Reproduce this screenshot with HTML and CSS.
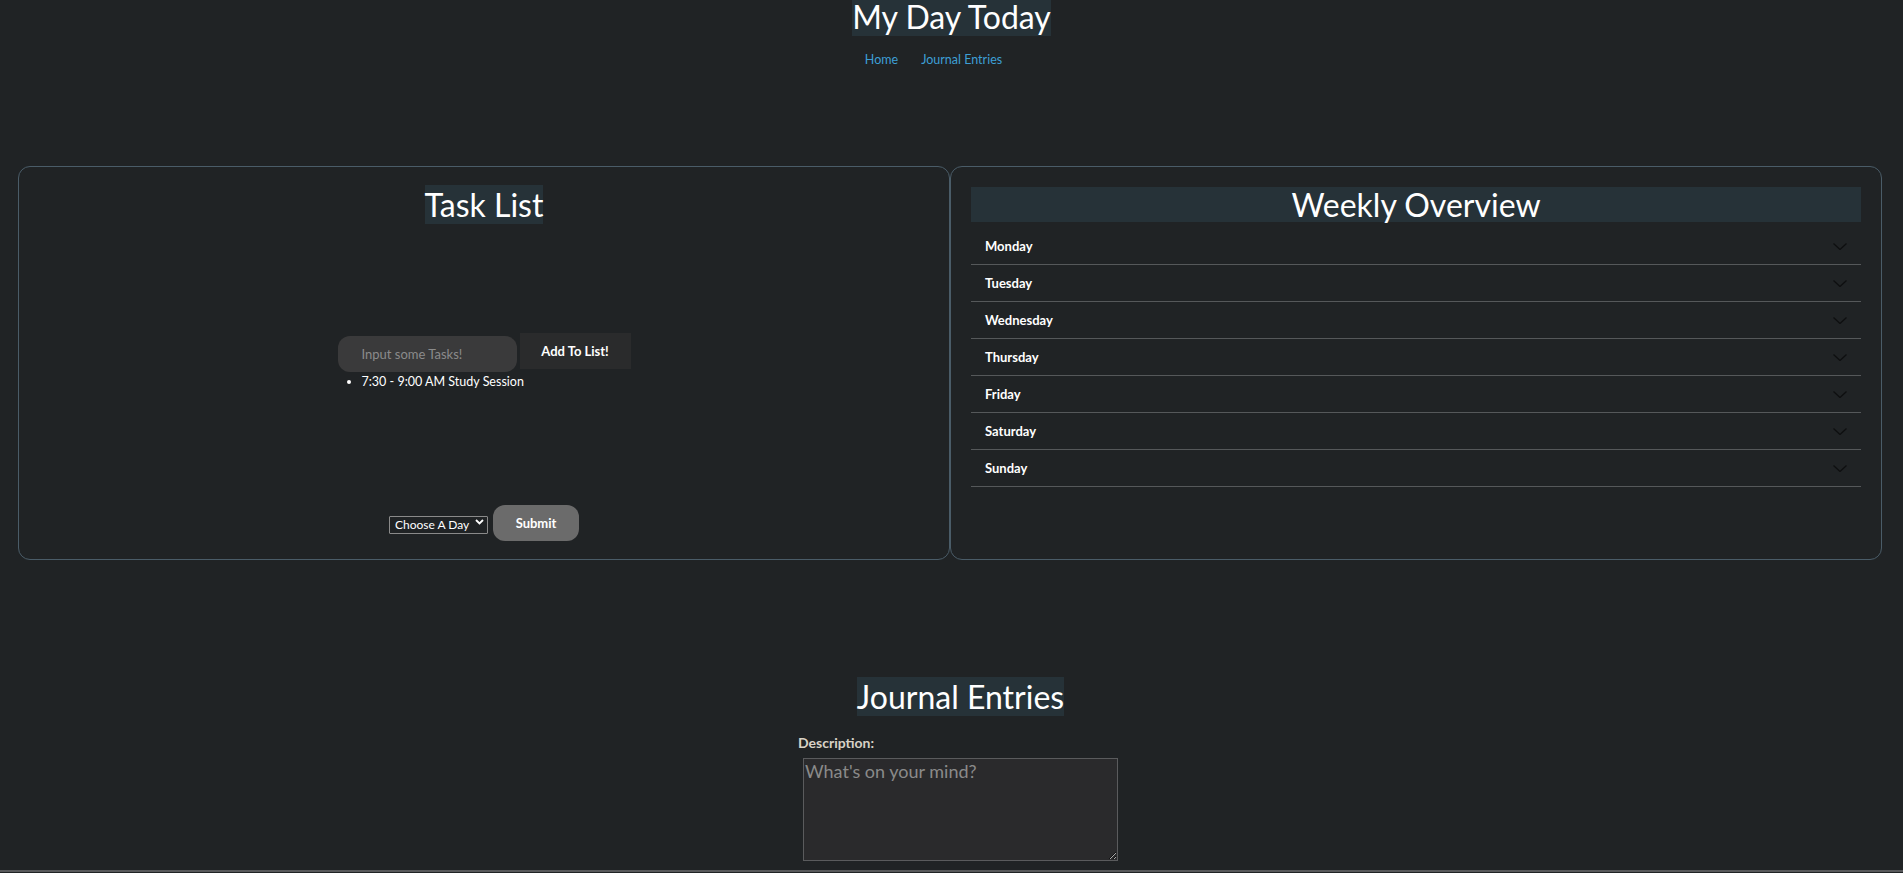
FILE: index.html
```html
<!DOCTYPE html>
<html lang="en">
<head>
<meta charset="utf-8">
<title>My Day Today</title>
<link rel="stylesheet" href="styles.css">
</head>
<body>
<header class="site-header">
  <h1 class="site-title"><span class="hl">My Day Today</span></h1>
  <nav class="site-nav">
    <a href="#" class="nav-link">Home</a>
    <a href="#" class="nav-link">Journal Entries</a>
  </nav>
</header>

<main class="panels">
  <section class="panel task-panel">
    <h2 class="panel-title"><span class="hl">Task List</span></h2>
    <div class="task-body">
      <div class="task-form">
        <input class="task-input" type="text" placeholder="Input some Tasks!">
        <button class="add-btn" type="button">Add To List!</button>
      </div>
      <ul class="task-list">
        <li>7:30 - 9:00 AM Study Session</li>
      </ul>
    </div>
    <div class="day-form">
      <span class="select-wrap">
        <select class="day-select">
          <option>Choose A Day</option>
          <option>Monday</option>
          <option>Tuesday</option>
        </select>
        <svg class="select-arrow" width="9" height="6" viewBox="0 0 9 6"><path d="M1 1 L4.5 4.5 L8 1" fill="none" stroke="#fff" stroke-width="1.8"/></svg>
      </span>
      <button class="submit-btn" type="button">Submit</button>
    </div>
  </section>

  <section class="panel week-panel">
    <h2 class="week-title">Weekly Overview</h2>
    <div class="days">
      <div class="day-row"><span>Monday</span><svg class="chev" width="14" height="7" viewBox="0 0 14 7"><path d="M0.5 0.5 L7 6.5 L13.5 0.5" fill="none" stroke="#0e0f10" stroke-width="1.3"/></svg></div>
      <div class="day-row"><span>Tuesday</span><svg class="chev" width="14" height="7" viewBox="0 0 14 7"><path d="M0.5 0.5 L7 6.5 L13.5 0.5" fill="none" stroke="#0e0f10" stroke-width="1.3"/></svg></div>
      <div class="day-row"><span>Wednesday</span><svg class="chev" width="14" height="7" viewBox="0 0 14 7"><path d="M0.5 0.5 L7 6.5 L13.5 0.5" fill="none" stroke="#0e0f10" stroke-width="1.3"/></svg></div>
      <div class="day-row"><span>Thursday</span><svg class="chev" width="14" height="7" viewBox="0 0 14 7"><path d="M0.5 0.5 L7 6.5 L13.5 0.5" fill="none" stroke="#0e0f10" stroke-width="1.3"/></svg></div>
      <div class="day-row"><span>Friday</span><svg class="chev" width="14" height="7" viewBox="0 0 14 7"><path d="M0.5 0.5 L7 6.5 L13.5 0.5" fill="none" stroke="#0e0f10" stroke-width="1.3"/></svg></div>
      <div class="day-row"><span>Saturday</span><svg class="chev" width="14" height="7" viewBox="0 0 14 7"><path d="M0.5 0.5 L7 6.5 L13.5 0.5" fill="none" stroke="#0e0f10" stroke-width="1.3"/></svg></div>
      <div class="day-row"><span>Sunday</span><svg class="chev" width="14" height="7" viewBox="0 0 14 7"><path d="M0.5 0.5 L7 6.5 L13.5 0.5" fill="none" stroke="#0e0f10" stroke-width="1.3"/></svg></div>
    </div>
  </section>
</main>

<section class="journal">
  <div class="journal-inner">
    <h2 class="journal-title"><span class="hl">Journal Entries</span></h2>
    <label class="desc-label" for="desc">Description:</label>
    <textarea id="desc" class="desc-input" placeholder="What's on your mind?"></textarea>
  </div>
</section>
<footer class="page-foot"></footer>
</body>
</html>
```

FILE: styles.css
```css
* { box-sizing: border-box; }

html, body {
  margin: 0;
  padding: 0;
  background: #202325;
  color: #ffffff;
  font-family: "Lato", "Noto Sans", "DejaVu Sans", sans-serif;
}

.hl {
  background: #263238;
}

.site-header {
  text-align: center;
}

.site-title {
  margin: 0;
  font-size: 32px;
  font-weight: 400;
  line-height: 34px;
}

.site-nav {
  margin-top: 17px;
  display: flex;
  justify-content: center;
  gap: 23px;
  padding-right: 36px;
}

.nav-link {
  color: #3d9fd6;
  text-decoration: none;
  font-size: 12.5px;
  line-height: 17px;
}

.panels {
  display: flex;
  margin-top: 98px;
  padding: 0 21px 0 18px;
}

.panel {
  flex: 1 1 0;
  min-width: 0;
  height: 394px;
  border: 1px solid #4a5c68;
  border-radius: 12px;
  padding: 20px;
}

.task-panel {
  display: flex;
  flex-direction: column;
  justify-content: space-between;
  align-items: center;
  padding-bottom: 18px;
}

.panel-title {
  margin: 0;
  font-size: 32px;
  font-weight: 400;
  line-height: 35px;
  text-align: center;
}

.task-body {
  display: flex;
  flex-direction: column;
  margin-bottom: 5px;
}

.task-form {
  display: flex;
  align-items: flex-start;
  gap: 3px;
}

.task-input {
  width: 179px;
  height: 36px;
  margin-top: 3px;
  border: none;
  border-radius: 12px;
  background: #3a3a3b;
  color: #fff;
  padding: 0 0 0 24px;
  font-family: inherit;
  font-size: 13px;
  outline: none;
}

.task-input::placeholder {
  color: #8b8b8b;
}

.add-btn {
  width: 111px;
  height: 36px;
  border: none;
  background: #2a2b2c;
  color: #fff;
  font-family: inherit;
  font-weight: 700;
  font-size: 13px;
}

.task-list {
  margin: 1px 0 0;
  padding-left: 24px;
  font-size: 12.5px;
  line-height: 17px;
}

.day-form {
  display: flex;
  align-items: center;
  gap: 5px;
}

.select-wrap {
  position: relative;
  display: inline-block;
}

.day-select {
  appearance: none;
  -webkit-appearance: none;
  width: 99px;
  height: 18px;
  border: 1px solid #8a8a8a;
  border-radius: 1px;
  background: #202325;
  color: #fff;
  font-family: inherit;
  font-size: 12px;
  line-height: 16px;
  padding: 0 0 0 5px;
}

.select-arrow {
  position: absolute;
  right: 4px;
  top: 6px;
  pointer-events: none;
}

.submit-btn {
  width: 86px;
  height: 36px;
  border: none;
  border-radius: 12px;
  background: #6b6b6b;
  color: #fff;
  font-family: inherit;
  font-weight: 700;
  font-size: 13px;
}

.week-title {
  margin: 0 0 6px;
  background: #263238;
  font-size: 32px;
  font-weight: 400;
  line-height: 35px;
  text-align: center;
}

.day-row {
  display: flex;
  justify-content: space-between;
  align-items: center;
  height: 37px;
  padding: 0 14px;
  border-bottom: 1px solid #55585a;
  font-size: 13px;
  font-weight: 700;
}

.journal {
  margin-top: 119px;
  padding-left: 18px;
}

.journal-inner {
  width: 325px;
  margin: 0 auto;
  display: flex;
  flex-direction: column;
}

.journal-title {
  margin: 0;
  font-size: 32px;
  font-weight: 400;
  line-height: 35px;
  text-align: center;
}

.desc-label {
  margin-top: 20px;
  font-size: 14px;
  font-weight: 700;
  line-height: 17px;
  color: #d8d2c6;
}

.desc-input {
  margin: 7px 0 0 5px;
  width: 315px;
  height: 103px;
  border: 1px solid #5a5b5d;
  background: #2a2a2c;
  color: #fff;
  padding: 1px;
  font-family: inherit;
  font-size: 18px;
  resize: vertical;
  outline: none;
}

.desc-input::placeholder {
  color: #8a8a8a;
}

.page-foot {
  margin-top: 9px;
  border-top: 2px solid #58595b;
  height: 40px;
}
```
